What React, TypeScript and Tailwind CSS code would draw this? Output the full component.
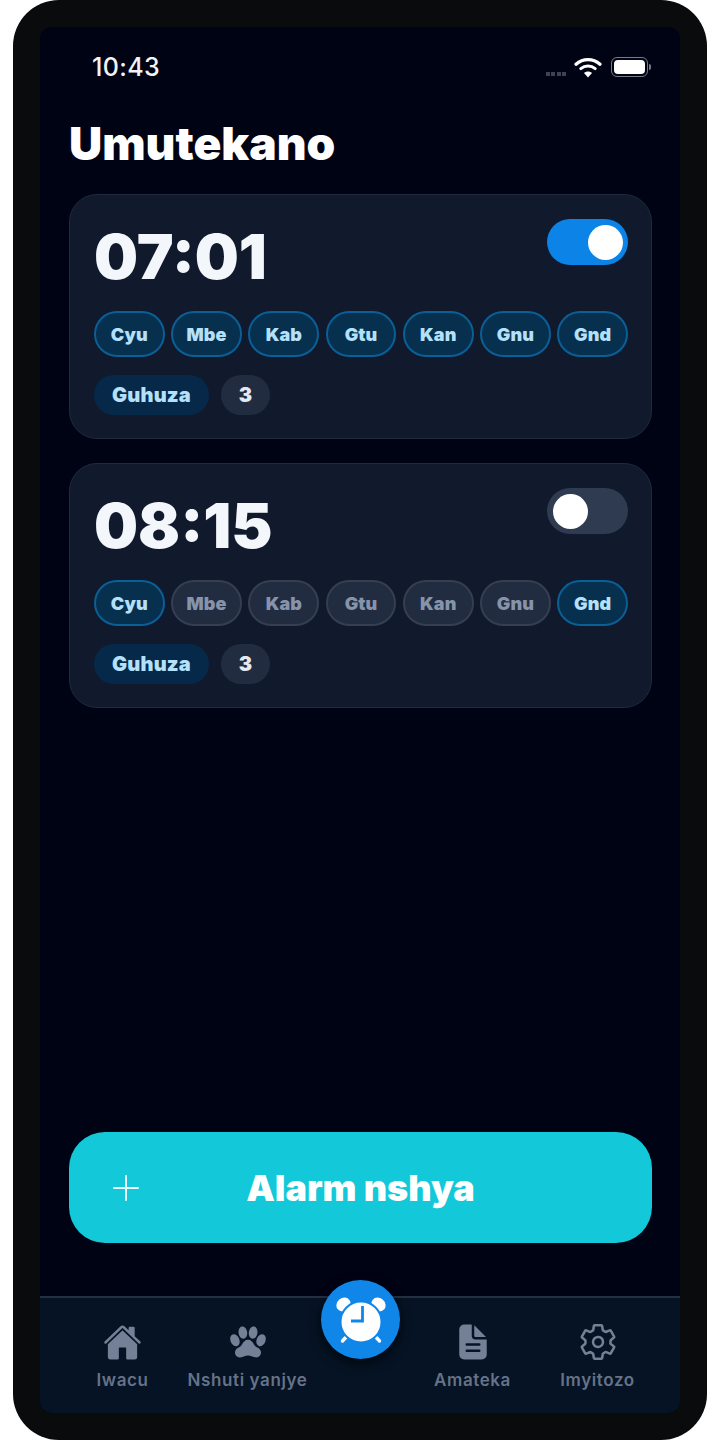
import React from "react";
import { IoHome, IoPaw, IoDocumentText, IoSettingsOutline } from "react-icons/io5";

const days = ["Cyu", "Mbe", "Kab", "Gtu", "Kan", "Gnu", "Gnd"];

function Chip({ label, on }: { label: string; on: boolean }) {
  return (
    <div
      className={
        on
          ? "flex h-[46px] flex-1 items-center justify-center rounded-full border-2 border-[#0a5f97] bg-[#07304f] text-[18px] font-black tracking-[0.1px] text-[#b5e0fa]"
          : "flex h-[46px] flex-1 items-center justify-center rounded-full border-2 border-[#353f51] bg-[#222c40] text-[18px] font-black tracking-[0.1px] text-[#8593ab]"
      }
    >
      {label}
    </div>
  );
}

function AlarmCard({ time, on, active }: { time: string; on: boolean; active: string[] }) {
  return (
    <div className="flex h-[245px] flex-col rounded-[28px] border border-[#202a3d] bg-[#111a2c] pt-6 pr-[23px] pl-6">
      <div className="flex h-[70px] items-start justify-between">
        <div className="mt-[1px] text-[62px] leading-[74px] font-black text-[#f3f6fa]">{time}</div>
        <div
          className={
            on
              ? "flex h-[46px] w-[81px] items-center justify-end rounded-full bg-[#0c83e6] px-[5px]"
              : "flex h-[46px] w-[81px] items-center justify-start rounded-full bg-[#2f3b50] px-[6px]"
          }
        >
          <div className="h-[35px] w-[35px] rounded-full bg-white" />
        </div>
      </div>
      <div className="mt-[22px] flex gap-[6.5px]">
        {days.map((d) => (
          <Chip key={d} label={d} on={active.includes(d)} />
        ))}
      </div>
      <div className="mt-[18px] flex gap-3">
        <div className="flex h-10 w-[115px] items-center justify-center rounded-full bg-[#06294a] text-[20px] font-black tracking-[0.2px] text-[#b5e0fa]">
          Guhuza
        </div>
        <div className="flex h-10 w-[49px] items-center justify-center rounded-full bg-[#222c40] text-[20px] font-black text-[#e4e9f0]">
          3
        </div>
      </div>
    </div>
  );
}

function Tab({ label, icon }: { label: string; icon?: React.ReactNode }) {
  return (
    <div className="flex flex-col items-center">
      <div className="flex h-[40px] items-center justify-center text-[#738096]">{icon}</div>
      <div className="mt-[6px] text-[17px] leading-[24px] font-semibold tracking-[0.6px] whitespace-nowrap text-[#667287]">
        {label}
      </div>
    </div>
  );
}

export default function App() {
  return (
    <div className="h-[1440px] w-[720px] bg-white font-['Inter',sans-serif]">
      <div className="ml-[13px] flex h-[1440px] w-[694px] rounded-[46px] bg-[#0a0b0d] px-[27px] py-[27px]">
        <div className="relative flex h-[1386px] w-[640px] flex-col rounded-[12px] bg-[#000314]">
          <div className="flex h-[91px] items-start justify-between pt-[24px] pr-[29px] pl-[52px]">
            <div className="text-[25px] leading-[32px] font-medium tracking-[0.4px] text-[#f2f3f5]">10:43</div>
            <div className="flex items-center pt-[5px]">
              <div className="mt-[14px] flex gap-[1.5px]">
                <div className="h-[4px] w-[4px] bg-[#3d4356]" />
                <div className="h-[4px] w-[4px] bg-[#3d4356]" />
                <div className="h-[4px] w-[4px] bg-[#3d4356]" />
                <div className="h-[4px] w-[4px] bg-[#3d4356]" />
              </div>
              <svg className="ml-[8px]" width="28" height="22" viewBox="0 0 28 22" fill="none">
                <path d="M2 8.2C9 2 19 2 26 8.2" stroke="#fff" strokeWidth="3.2" strokeLinecap="round" />
                <path d="M6.8 12.6C11 9 17 9 21.2 12.6" stroke="#fff" strokeWidth="3" strokeLinecap="round" />
                <path d="M10 17 C12.4 15 15.6 15 18 17 L14 21.5 Z" fill="#fff" />
              </svg>
              <div className="ml-[9px] flex items-center">
                <div className="flex h-[20px] w-[37px] items-center rounded-[6px] border border-[#767b88] p-[2px]">
                  <div className="h-full w-full rounded-[4px] bg-white" />
                </div>
                <div className="ml-[1px] h-[6px] w-[2px] rounded-r-full bg-[#767b88]" />
              </div>
            </div>
          </div>
          <div className="pl-[29px] text-[46px] leading-[50px] font-black text-white">Umutekano</div>
          <div className="mt-[26px] flex flex-col gap-6 pr-[28px] pl-[29px]">
            <AlarmCard time="07:01" on active={days} />
            <AlarmCard time="08:15" on={false} active={["Cyu", "Gnd"]} />
          </div>
          <div className="flex-1" />
          <div className="mr-[28px] mb-[53px] ml-[29px] grid h-[111px] grid-cols-[1fr_auto_1fr] items-center rounded-[36px] bg-[#12c8d9] pl-[44px]">
            <svg width="26" height="26" viewBox="0 0 26 26" fill="none" stroke="#e9fbfd" strokeWidth="2" strokeLinecap="round">
              <path d="M13 1v24M1 13h24" />
            </svg>
            <div className="ml-[-44px] text-[36px] leading-[44px] font-black text-white">Alarm nshya</div>
            <div />
          </div>
          <div className="h-[117px] rounded-b-[12px] border-t-2 border-[#253043] bg-[#051324] pt-[24px] pl-[20px]">
            <div className="grid grid-cols-[125px_125px_100px_125px_125px]">
              <Tab label="Iwacu" icon={<IoHome size={39} />} />
              <Tab label="Nshuti yanjye" icon={<IoPaw size={38} />} />
              <div />
              <Tab label="Amateka" icon={<IoDocumentText size={40} />} />
              <Tab label="Imyitozo" icon={<IoSettingsOutline size={40} />} />
            </div>
          </div>
          <div className="absolute top-[1253px] left-[281px] flex h-[79px] w-[79px] items-center justify-center rounded-full bg-[#0f86e8] shadow-[0_4px_12px_rgba(0,0,0,0.7)]">
            <svg width="52" height="52" viewBox="0 0 52 52">
              <ellipse cx="8.5" cy="10.5" rx="7.5" ry="6.5" transform="rotate(-40 8.5 10.5)" fill="#fff" />
              <ellipse cx="43.5" cy="10.5" rx="7.5" ry="6.5" transform="rotate(40 43.5 10.5)" fill="#fff" />
              <path d="M13 41L7.5 47M39 41L44.5 47" stroke="#fff" strokeWidth="3.4" strokeLinecap="round" />
              <circle cx="26" cy="28" r="20.5" fill="#fff" stroke="#0f86e8" strokeWidth="2" />
              <path d="M27.5 12V27H16" fill="none" stroke="#0f86e8" strokeWidth="2.8" />
            </svg>
          </div>
        </div>
      </div>
    </div>
  );
}
